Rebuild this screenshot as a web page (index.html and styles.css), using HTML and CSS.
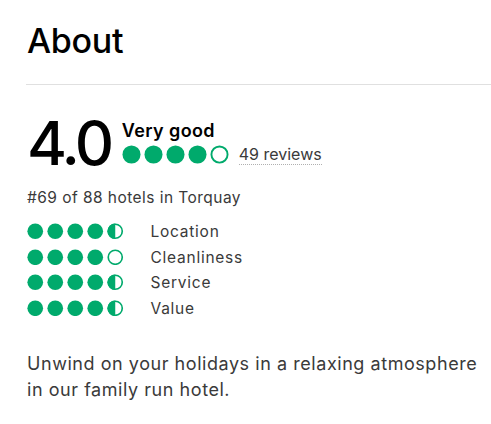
FILE: index.html
```html
<!DOCTYPE html>
<html>
<head>
<meta charset="utf-8">
<link rel="stylesheet" href="styles.css">
</head>
<body>
<section class="about">
  <h2 class="title">About</h2>
  <div class="divider"></div>
  <div class="summary">
    <div class="score">4.0</div>
    <div class="summary-info">
      <div class="verdict">Very good</div>
      <div class="summary-bubbles">
        <span class="bubbles big">
          <svg viewBox="0 0 20 20"><circle cx="10" cy="10" r="9.5" class="full"/></svg>
          <svg viewBox="0 0 20 20"><circle cx="10" cy="10" r="9.5" class="full"/></svg>
          <svg viewBox="0 0 20 20"><circle cx="10" cy="10" r="9.5" class="full"/></svg>
          <svg viewBox="0 0 20 20"><circle cx="10" cy="10" r="9.5" class="full"/></svg>
          <svg viewBox="0 0 20 20"><circle cx="10" cy="10" r="8.5" class="empty"/></svg>
        </span>
        <span class="reviews">49 reviews</span>
      </div>
    </div>
  </div>
  <div class="ranking">#69 of 88 hotels in Torquay</div>
  <div class="subratings">
    <div class="subrow">
      <span class="bubbles small">
        <svg viewBox="0 0 20 20"><circle cx="10" cy="10" r="9.5" class="full"/></svg>
        <svg viewBox="0 0 20 20"><circle cx="10" cy="10" r="9.5" class="full"/></svg>
        <svg viewBox="0 0 20 20"><circle cx="10" cy="10" r="9.5" class="full"/></svg>
        <svg viewBox="0 0 20 20"><circle cx="10" cy="10" r="9.5" class="full"/></svg>
        <svg viewBox="0 0 20 20"><circle cx="10" cy="10" r="8.5" class="empty"/><path d="M10 0.5 A9.5 9.5 0 0 0 10 19.5 Z" class="halffill"/></svg>
      </span>
      <span class="label">Location</span>
    </div>
    <div class="subrow">
      <span class="bubbles small">
        <svg viewBox="0 0 20 20"><circle cx="10" cy="10" r="9.5" class="full"/></svg>
        <svg viewBox="0 0 20 20"><circle cx="10" cy="10" r="9.5" class="full"/></svg>
        <svg viewBox="0 0 20 20"><circle cx="10" cy="10" r="9.5" class="full"/></svg>
        <svg viewBox="0 0 20 20"><circle cx="10" cy="10" r="9.5" class="full"/></svg>
        <svg viewBox="0 0 20 20"><circle cx="10" cy="10" r="8.5" class="empty"/></svg>
      </span>
      <span class="label">Cleanliness</span>
    </div>
    <div class="subrow">
      <span class="bubbles small">
        <svg viewBox="0 0 20 20"><circle cx="10" cy="10" r="9.5" class="full"/></svg>
        <svg viewBox="0 0 20 20"><circle cx="10" cy="10" r="9.5" class="full"/></svg>
        <svg viewBox="0 0 20 20"><circle cx="10" cy="10" r="9.5" class="full"/></svg>
        <svg viewBox="0 0 20 20"><circle cx="10" cy="10" r="9.5" class="full"/></svg>
        <svg viewBox="0 0 20 20"><circle cx="10" cy="10" r="8.5" class="empty"/><path d="M10 0.5 A9.5 9.5 0 0 0 10 19.5 Z" class="halffill"/></svg>
      </span>
      <span class="label">Service</span>
    </div>
    <div class="subrow">
      <span class="bubbles small">
        <svg viewBox="0 0 20 20"><circle cx="10" cy="10" r="9.5" class="full"/></svg>
        <svg viewBox="0 0 20 20"><circle cx="10" cy="10" r="9.5" class="full"/></svg>
        <svg viewBox="0 0 20 20"><circle cx="10" cy="10" r="9.5" class="full"/></svg>
        <svg viewBox="0 0 20 20"><circle cx="10" cy="10" r="9.5" class="full"/></svg>
        <svg viewBox="0 0 20 20"><circle cx="10" cy="10" r="8.5" class="empty"/><path d="M10 0.5 A9.5 9.5 0 0 0 10 19.5 Z" class="halffill"/></svg>
      </span>
      <span class="label">Value</span>
    </div>
  </div>
  <p class="description">Unwind on your holidays in a relaxing atmosphere in our family run hotel.</p>
</section>
</body>
</html>
```

FILE: styles.css
```css
html, body {
  margin: 0;
  padding: 0;
  background: #ffffff;
}

body {
  font-family: "Inter", "Liberation Sans", sans-serif;
  color: #3a3a3a;
}

.about {
  padding: 20px 0 0 27px;
}

.title {
  margin: 0;
  font-size: 34px;
  font-weight: 500;
  color: #000000;
  line-height: 42px;
  letter-spacing: -0.3px;
}

.divider {
  height: 1px;
  background: #e0e0e0;
  margin: 22px 0 0 -1px;
}

.summary {
  display: flex;
  align-items: flex-end;
  margin-top: 30px;
  gap: 11px;
}

.score {
  font-size: 61px;
  font-weight: 500;
  line-height: 56px;
  color: #000000;
  letter-spacing: -3.5px;
  margin-bottom: -6px;
}

.summary-info {
  display: flex;
  flex-direction: column;
}

.verdict {
  font-size: 18px;
  font-weight: 600;
  color: #000000;
  line-height: 22px;
  letter-spacing: 0.4px;
}

.summary-bubbles {
  display: flex;
  align-items: center;
  gap: 10px;
  margin-top: 2px;
}

.bubbles {
  display: flex;
}

.bubbles svg {
  display: block;
}

.bubbles.big {
  gap: 3px;
}

.bubbles.big svg {
  width: 19px;
  height: 19px;
}

.bubbles.small {
  gap: 3.5px;
}

.bubbles.small svg {
  width: 16.5px;
  height: 16.5px;
}

.full {
  fill: #00aa6c;
}

.empty {
  fill: #ffffff;
  stroke: #00aa6c;
  stroke-width: 2;
}

.halffill {
  fill: #00aa6c;
}

.reviews {
  font-size: 16px;
  color: #3a3a3a;
  line-height: 20px;
  border-bottom: 1px dotted #b0b0b0;
}

.ranking {
  margin-top: 23px;
  font-size: 15.5px;
  line-height: 20px;
  color: #3a3a3a;
  letter-spacing: 0.45px;
}

.subratings {
  margin-top: 15px;
  display: flex;
  flex-direction: column;
  gap: 8.5px;
}

.subrow {
  display: flex;
  align-items: center;
  gap: 27px;
}

.label {
  font-size: 15.5px;
  line-height: 17px;
  color: #3a3a3a;
  letter-spacing: 0.75px;
}

.description {
  margin: 34px 0 0;
  font-size: 18px;
  line-height: 26px;
  color: #3a3a3a;
  letter-spacing: 0.55px;
  max-width: 458px;
}
```
